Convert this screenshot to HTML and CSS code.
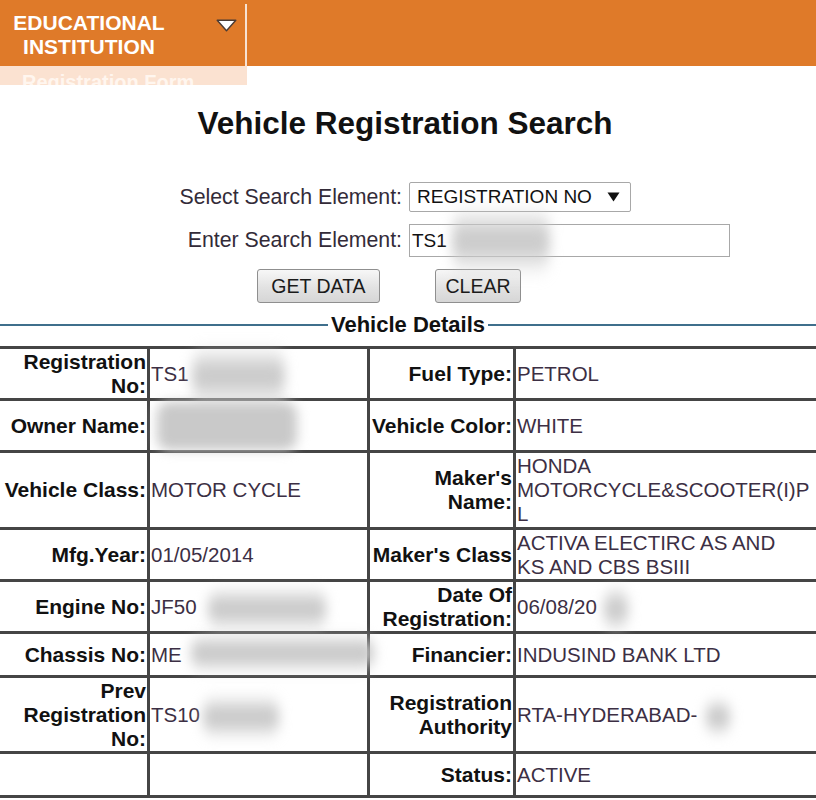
FILE: index.html
```html
<!DOCTYPE html>
<html lang="en">
<head>
<meta charset="utf-8">
<title>Vehicle Registration Search</title>
<link rel="stylesheet" href="styles.css">
</head>
<body>
<header class="topbar">
  <nav class="menu">
    <div class="menu-item">
      <span class="menu-label">EDUCATIONAL<br>INSTITUTION</span>
      <svg class="caret" width="21" height="13" viewBox="0 0 21 13"><polygon points="1.2,1.2 19.8,1.2 10.5,11.8" fill="#ffffff" stroke="#4a3b35" stroke-width="1.4" stroke-linejoin="round"/></svg>
    </div>
    <div class="submenu"><span class="submenu-link">Registration Form</span></div>
  </nav>
</header>

<main class="page">
  <h1 class="title">Vehicle Registration Search</h1>

  <form class="search">
    <label class="search-label">Select Search Element:</label>
    <div class="select">
      <span>REGISTRATION NO</span>
      <svg class="select-arrow" width="13" height="10" viewBox="0 0 13 10"><polygon points="0.5,0.5 12.5,0.5 6.5,9.5" fill="#111"/></svg>
    </div>
    <label class="search-label">Enter Search Element:</label>
    <div class="field">TS1<span class="blur blur-input"></span></div>
    <div class="actions">
      <button type="button" class="btn btn-get">GET DATA</button>
      <button type="button" class="btn btn-clear">CLEAR</button>
    </div>
  </form>

  <fieldset class="details">
    <legend class="details-legend">Vehicle Details</legend>
    <table class="details-table">
      <colgroup>
        <col class="c1"><col class="c2"><col class="c3"><col class="c4">
      </colgroup>
      <tr>
        <td class="lbl">Registration No:</td>
        <td class="val">TS1<span class="blur blur-reg"></span></td>
        <td class="lbl">Fuel Type:</td>
        <td class="val">PETROL</td>
      </tr>
      <tr>
        <td class="lbl">Owner Name:</td>
        <td class="val"><span class="blur blur-owner"></span></td>
        <td class="lbl">Vehicle Color:</td>
        <td class="val">WHITE</td>
      </tr>
      <tr class="tall">
        <td class="lbl">Vehicle Class:</td>
        <td class="val">MOTOR CYCLE</td>
        <td class="lbl">Maker's Name:</td>
        <td class="val">HONDA<br>MOTORCYCLE&amp;SCOOTER(I)P<br>L</td>
      </tr>
      <tr>
        <td class="lbl">Mfg.Year:</td>
        <td class="val">01/05/2014</td>
        <td class="lbl">Maker's Class</td>
        <td class="val">ACTIVA ELECTIRC AS AND<br>KS AND CBS BSIII</td>
      </tr>
      <tr>
        <td class="lbl">Engine No:</td>
        <td class="val">JF50<span class="blur blur-engine"></span></td>
        <td class="lbl">Date Of Registration:</td>
        <td class="val">06/08/20<span class="blur blur-date"></span></td>
      </tr>
      <tr>
        <td class="lbl">Chassis No:</td>
        <td class="val">ME<span class="blur blur-chassis"></span></td>
        <td class="lbl">Financier:</td>
        <td class="val">INDUSIND BANK LTD</td>
      </tr>
      <tr>
        <td class="lbl">Prev Registration No:</td>
        <td class="val">TS10<span class="blur blur-prev"></span></td>
        <td class="lbl">Registration Authority</td>
        <td class="val">RTA-HYDERABAD-<span class="blur blur-rta"></span></td>
      </tr>
      <tr>
        <td class="lbl"></td>
        <td class="val"></td>
        <td class="lbl">Status:</td>
        <td class="val">ACTIVE</td>
      </tr>
    </table>
  </fieldset>
</main>
</body>
</html>
```

FILE: styles.css
```css
html, body {
  margin: 0;
  padding: 0;
  background: #ffffff;
  overflow: hidden;
}

body {
  font-family: "Liberation Sans", Arial, sans-serif;
  color: #111;
}

/* ---------- top bar ---------- */
.topbar {
  position: relative;
  height: 66px;
  background: #df7a29;
}

.menu {
  height: 100%;
  box-sizing: border-box;
  padding-top: 4px;
}

.menu-item {
  display: flex;
  align-items: flex-start;
  width: 245px;
  height: 62px;
  border-right: 2px solid #f7e2d3;
}

.menu-label {
  width: 178px;
  margin-top: 7px;
  text-align: center;
  color: #ffffff;
  font-weight: bold;
  font-size: 21px;
  line-height: 24px;
}

.caret {
  margin-left: 38px;
  margin-top: 15px;
}

.submenu {
  position: absolute;
  top: 66px;
  left: 0;
  width: 247px;
  height: 19px;
  background: #fbe2d1;
  overflow: hidden;
}

.submenu-link {
  display: block;
  padding: 4px 0 0 22px;
  color: #fff6ef;
  font-weight: bold;
  font-size: 20px;
  line-height: 24px;
}

/* ---------- title ---------- */
.title {
  margin: 39px 0 41px;
  text-align: center;
  font-size: 31.5px;
  line-height: 36px;
  font-weight: bold;
  color: #111;
  padding-right: 6px;
}

/* ---------- search form ---------- */
.search {
  display: grid;
  grid-template-columns: 402px auto;
  column-gap: 7px;
  row-gap: 12px;
  align-items: center;
  justify-items: start;
  margin: 0;
}

.search-label {
  justify-self: end;
  font-size: 21.3px;
  color: #332b38;
}

.select {
  box-sizing: border-box;
  width: 222px;
  height: 30px;
  display: flex;
  align-items: center;
  justify-content: space-between;
  padding: 0 10px 0 7px;
  border: 1px solid #a8a8a8;
  border-radius: 2px;
  background: #fff;
  font-size: 19px;
  color: #111;
}

.field {
  box-sizing: border-box;
  width: 321px;
  height: 33px;
  display: flex;
  align-items: center;
  padding-left: 2px;
  border: 1px solid #a8a8a8;
  background: #fff;
  font-size: 19px;
  color: #111;
}

.actions {
  grid-column: 1 / -1;
  display: flex;
  gap: 55px;
  padding-left: 257px;
}

.btn {
  box-sizing: border-box;
  height: 34px;
  padding: 0;
  border: 1px solid #8f8f8f;
  border-radius: 3px;
  background: linear-gradient(#f7f7f7, #e2e2e2 55%, #d6d6d6);
  font-family: "Liberation Sans", Arial, sans-serif;
  font-size: 19.5px;
  color: #1a1a1a;
}

.btn-get { width: 123px; }
.btn-clear { width: 86px; }

/* ---------- details ---------- */
.details {
  margin: 9px 0 0;
  padding: 0;
  border: none;
  border-top: 2px solid #3f6f8c;
  min-inline-size: 0;
}

.details-legend {
  margin: 0 auto;
  padding: 0 3px;
  font-size: 22px;
  line-height: 25px;
  font-weight: bold;
  color: #111;
}

.details-table {
  width: 100%;
  margin-top: 9px;
  border-collapse: collapse;
  table-layout: fixed;
  font-size: 20.5px;
  line-height: 24px;
}

.c1 { width: 148.5px; }
.c2 { width: 220px; }
.c3 { width: 146px; }

.details-table td {
  height: 40px;
  padding: 1px 1px 0;
  border: 3px solid #454545;
  vertical-align: middle;
}

.details-table .tall td { padding-bottom: 1px; }

.details-table td:first-child { border-left: none; }
.details-table td:last-child { border-right: none; }

.lbl {
  text-align: right;
  font-weight: bold;
  font-size: 21px;
  color: #111;
}

.val {
  text-align: left;
  color: #3c2f44;
  white-space: nowrap;
}

/* ---------- redaction smudges ---------- */
.blur {
  display: inline-block;
  height: 20px;
  vertical-align: middle;
  background: #c9c9c9;
  border-radius: 12px;
  filter: blur(6px);
}

.blur-input { width: 100px; margin-left: 4px; transform: scaleY(2); }
.blur-reg { width: 95px; margin-left: 2px; transform: scaleY(1.8); }
.blur-owner { display: block; width: 140px; height: 48px; margin-left: 6px; }
.blur-engine { width: 120px; margin-left: 10px; transform: scaleY(1.4); }
.blur-chassis { width: 185px; margin-left: 8px; transform: translateY(-4px) scaleY(1.3); }
.blur-prev { width: 78px; margin-left: 2px; transform: scaleY(1.4); }
.blur-date { width: 26px; margin-left: 6px; transform: scaleY(1.5); }
.blur-rta { width: 26px; margin-left: 8px; transform: scaleY(1.3); }
```
